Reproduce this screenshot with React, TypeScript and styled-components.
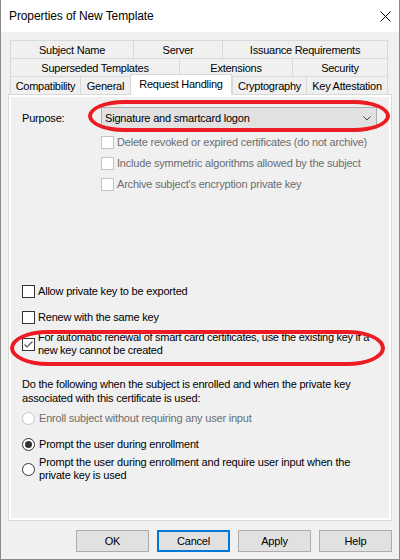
import React from 'react';
import styled, { createGlobalStyle, css } from 'styled-components';

const Global = createGlobalStyle`
  html, body { margin: 0; padding: 0; background: #fff; }
  body { font-family: "Liberation Sans", Arial, sans-serif; font-size: 11px; color: #000; }
  * { box-sizing: border-box; }
`;

const Window = styled.div`
  position: relative;
  width: 400px;
  height: 560px;
  border: 1px solid #8a8a8a;
  border-top: none;
  display: flex;
  flex-direction: column;
  background: #f0f0f0;
  overflow: hidden;
`;

const TitleBar = styled.div`
  height: 32px;
  flex: none;
  background: #fff;
  display: flex;
  align-items: center;
  justify-content: space-between;
  padding-left: 8px;
  font-size: 12px;
  letter-spacing: -0.1px;
`;

const CloseBtn = styled.div`
  width: 28px;
  height: 32px;
  display: flex;
  align-items: center;
  justify-content: center;
`;

const Body = styled.div`
  flex: 1;
  display: flex;
  flex-direction: column;
  padding: 8px 7px 7px;
`;

const TabStrip = styled.div`
  margin: 0 4px 0 2px;
  display: flex;
  flex-direction: column;
`;

const TabRow = styled.div`
  display: flex;
  height: 18px;
`;

const Tab = styled.div<{ $w: number; $active?: boolean }>`
  width: ${(p) => p.$w}px;
  flex: none;
  height: 18px;
  border-top: 1px solid #d9d9d9;
  border-left: 1px solid #d9d9d9;
  background: #f0f0f0;
  display: flex;
  align-items: center;
  justify-content: center;
  white-space: nowrap;
  letter-spacing: -0.25px;
  &:last-child {
    border-right: 1px solid #d9d9d9;
  }
  ${(p) =>
    p.$active &&
    css`
      background: #fff;
      height: 21px;
      margin-top: -2px;
      position: relative;
      z-index: 2;
      border-right: 1px solid #d9d9d9;
      padding-bottom: 2px;
    `}
`;

const Panel = styled.div`
  height: 427px;
  flex: none;
  border: 1px solid #d9d9d9;
  background: #fff;
  padding: 2px;
  display: flex;
`;

const Page = styled.div`
  flex: 1;
  background: #f0f0f0;
  display: flex;
  flex-direction: column;
  padding: 10px 0 0 11px;
  letter-spacing: -0.2px;
`;

const PurposeRow = styled.div`
  display: flex;
  align-items: center;
  height: 22px;
`;

const FieldLabel = styled.div`
  width: 79px;
  flex: none;
`;

const Combo = styled.div`
  width: 276px;
  height: 22px;
  background: #e1e1e1;
  border: 1px solid #adadad;
  display: flex;
  align-items: center;
  justify-content: space-between;
  padding: 0 5px 0 3px;
`;

const SubOptions = styled.div`
  margin-left: 79px;
  margin-top: 3px;
  display: flex;
  flex-direction: column;
`;

const OptionRow = styled.div<{ $h: number; $mt?: number; $disabled?: boolean; $tight?: boolean }>`
  display: flex;
  align-items: center;
  gap: 3px;
  height: ${(p) => p.$h}px;
  margin-top: ${(p) => p.$mt ?? 0}px;
  color: ${(p) => (p.$disabled ? '#6d6d6d' : '#000')};
  line-height: 13px;
  ${(p) => p.$tight && css`letter-spacing: -0.28px;`}
`;

const RadioRow = styled(OptionRow)`
  gap: 4px;
`;

const Box = styled.div<{ $disabled?: boolean }>`
  width: 13px;
  height: 13px;
  flex: none;
  background: #fff;
  border: 1px solid ${(p) => (p.$disabled ? '#c4c4c4' : '#333')};
  display: flex;
  align-items: center;
  justify-content: center;
`;

const Circle = styled.div<{ $disabled?: boolean }>`
  width: 13px;
  height: 13px;
  flex: none;
  border-radius: 50%;
  background: #fff;
  border: 1px solid ${(p) => (p.$disabled ? '#c4c4c4' : '#333')};
  display: flex;
  align-items: center;
  justify-content: center;
`;

const Dot = styled.div`
  width: 7px;
  height: 7px;
  border-radius: 50%;
  background: #333;
`;

const Description = styled.div`
  margin-top: 19px;
  line-height: 14px;
`;

const Footer = styled.div`
  margin-top: 9px;
  display: flex;
  justify-content: flex-end;
  gap: 8px;
`;

const Button = styled.div<{ $focused?: boolean }>`
  width: 73px;
  height: 22px;
  background: #e1e1e1;
  border: 1px solid ${(p) => (p.$focused ? '#0078d7' : '#adadad')};
  ${(p) => p.$focused && css`box-shadow: inset 0 0 0 1px #0078d7;`}
  display: flex;
  align-items: center;
  justify-content: center;
  letter-spacing: -0.2px;
`;

const Highlight = styled.div<{ $x: number; $y: number; $w: number; $h: number; $r: string }>`
  position: absolute;
  left: ${(p) => p.$x}px;
  top: ${(p) => p.$y}px;
  width: ${(p) => p.$w}px;
  height: ${(p) => p.$h}px;
  border: 4px solid #ed1c24;
  border-radius: ${(p) => p.$r};
  pointer-events: none;
  z-index: 5;
`;

const Check = () => (
  <svg width="11" height="11" viewBox="0 0 11 11">
    <polyline points="1.5,5.5 4,8 9.5,2.5" fill="none" stroke="#555" strokeWidth="1.1" />
  </svg>
);

const Checkbox = ({ checked, disabled }: { checked?: boolean; disabled?: boolean }) => (
  <Box $disabled={disabled}>{checked && <Check />}</Box>
);

const Radio = ({ selected, disabled }: { selected?: boolean; disabled?: boolean }) => (
  <Circle $disabled={disabled}>{selected && <Dot />}</Circle>
);

export default function App() {
  return (
    <>
      <Global />
      <Window>
        <TitleBar>
          <span>Properties of New Template</span>
          <CloseBtn>
            <svg width="11" height="11" viewBox="0 0 11 11">
              <path d="M0.5 0.5 L10.5 10.5 M10.5 0.5 L0.5 10.5" stroke="#000" strokeWidth="1" fill="none" />
            </svg>
          </CloseBtn>
        </TitleBar>
        <Body>
          <TabStrip>
            <TabRow>
              <Tab $w={123}>Subject Name</Tab>
              <Tab $w={89}>Server</Tab>
              <Tab $w={166}>Issuance Requirements</Tab>
            </TabRow>
            <TabRow>
              <Tab $w={169}>Superseded Templates</Tab>
              <Tab $w={113}>Extensions</Tab>
              <Tab $w={96}>Security</Tab>
            </TabRow>
            <TabRow>
              <Tab $w={70}>Compatibility</Tab>
              <Tab $w={50}>General</Tab>
              <Tab $w={102} $active>Request Handling</Tab>
              <Tab $w={74}>Cryptography</Tab>
              <Tab $w={82}>Key Attestation</Tab>
            </TabRow>
          </TabStrip>
          <Panel>
            <Page>
              <PurposeRow>
                <FieldLabel>Purpose:</FieldLabel>
                <Combo>
                  <span>Signature and smartcard logon</span>
                  <svg width="8" height="5" viewBox="0 0 8 5">
                    <polyline points="0.5,0.5 4,4 7.5,0.5" fill="none" stroke="#444" strokeWidth="1" />
                  </svg>
                </Combo>
              </PurposeRow>
              <SubOptions>
                <OptionRow $h={21} $disabled>
                  <Checkbox disabled />
                  <span>Delete revoked or expired certificates (do not archive)</span>
                </OptionRow>
                <OptionRow $h={21} $disabled>
                  <Checkbox disabled />
                  <span>Include symmetric algorithms allowed by the subject</span>
                </OptionRow>
                <OptionRow $h={21} $disabled>
                  <Checkbox disabled />
                  <span>Archive subject's encryption private key</span>
                </OptionRow>
              </SubOptions>
              <OptionRow $h={26} $mt={83}>
                <Checkbox />
                <span>Allow private key to be exported</span>
              </OptionRow>
              <OptionRow $h={26}>
                <Checkbox />
                <span>Renew with the same key</span>
              </OptionRow>
              <OptionRow $h={28} $tight>
                <Checkbox checked />
                <span>
                  For automatic renewal of smart card certificates, use the existing key if a
                  <br />
                  new key cannot be created
                </span>
              </OptionRow>
              <Description>
                Do the following when the subject is enrolled and when the private key
                <br />
                associated with this certificate is used:
              </Description>
              <RadioRow $h={20} $mt={3} $disabled>
                <Radio disabled />
                <span>Enroll subject without requiring any user input</span>
              </RadioRow>
              <RadioRow $h={20} $mt={6}>
                <Radio selected />
                <span>Prompt the user during enrollment</span>
              </RadioRow>
              <RadioRow $h={26} $mt={2}>
                <Radio />
                <span>
                  Prompt the user during enrollment and require user input when the
                  <br />
                  private key is used
                </span>
              </RadioRow>
            </Page>
          </Panel>
          <Footer>
            <Button>OK</Button>
            <Button $focused>Cancel</Button>
            <Button>Apply</Button>
            <Button>Help</Button>
          </Footer>
        </Body>
        <Highlight $x={87} $y={100} $w={302} $h={32} $r="36px / 16px" />
        <Highlight $x={9} $y={330} $w={375} $h={36} $r="38px / 18px" />
      </Window>
    </>
  );
}
